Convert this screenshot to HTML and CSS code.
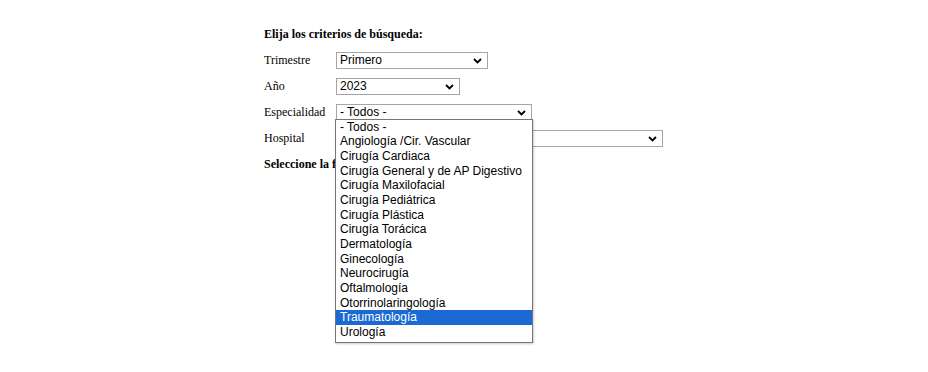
FILE: index.html
```html
<!DOCTYPE html>
<html lang="es">
<head>
<meta charset="UTF-8" />
<title>Listas de espera</title>
<link rel="stylesheet" href="styles.css">
</head>
<body>
<div id="criterios">
    <h4>Elija los criterios de búsqueda:</h4>
    <div class="fila">
        <label>Trimestre</label>
        <span class="combo w-trim">
            <select><option>Primero</option></select>
            <svg class="flecha" width="9" height="6" viewBox="0 0 9 6"><path d="M1 1 L4.5 4.5 L8 1" /></svg>
        </span>
    </div>
    <div class="fila">
        <label>Año</label>
        <span class="combo w-anio">
            <select><option>2023</option></select>
            <svg class="flecha" width="9" height="6" viewBox="0 0 9 6"><path d="M1 1 L4.5 4.5 L8 1" /></svg>
        </span>
    </div>
    <div class="fila">
        <label>Especialidad</label>
        <span class="combo w-esp">
            <select><option>- Todos -</option></select>
            <svg class="flecha" width="9" height="6" viewBox="0 0 9 6"><path d="M1 1 L4.5 4.5 L8 1" /></svg>
            <ul class="lista">
                <li>- Todos -</li>
                <li>Angiología /Cir. Vascular</li>
                <li>Cirugía Cardiaca</li>
                <li>Cirugía General y de AP Digestivo</li>
                <li>Cirugía Maxilofacial</li>
                <li>Cirugía Pediátrica</li>
                <li>Cirugía Plástica</li>
                <li>Cirugía Torácica</li>
                <li>Dermatología</li>
                <li>Ginecología</li>
                <li>Neurocirugía</li>
                <li>Oftalmología</li>
                <li>Otorrinolaringología</li>
                <li class="sel">Traumatología</li>
                <li>Urología</li>
            </ul>
        </span>
    </div>
    <div class="fila">
        <label>Hospital</label>
        <span class="combo w-hosp">
            <select><option></option></select>
            <svg class="flecha" width="9" height="6" viewBox="0 0 9 6"><path d="M1 1 L4.5 4.5 L8 1" /></svg>
        </span>
    </div>
    <h4>Seleccione la fecha:</h4>
</div>
</body>
</html>
```
FILE: styles.css
```css
*{margin:0;padding:0;}
html,body{min-height:372px;}
body{background:#fff;color:#000;font:12px/1.2 "Liberation Serif","Times New Roman",serif;}
ul{list-style-type:none;}
#criterios{width:400px;margin:0 auto;padding-top:21px;}
#criterios h4{font:700 12px/26px "Liberation Serif","Times New Roman",serif;}
.fila{display:flex;align-items:center;height:26px;}
.fila label{width:72px;}
.combo{position:relative;display:block;height:17px;}
.combo select{-webkit-appearance:none;appearance:none;display:block;width:100%;height:17px;box-sizing:border-box;border:1px solid #a5a5a5;border-radius:0;background:#fff;font:12px/15px "Liberation Sans",Arial,sans-serif;color:#000;padding:0 0 0 3px;outline:none;}
.flecha{position:absolute;right:6px;top:6px;pointer-events:none;}
.flecha path{fill:none;stroke:#000;stroke-width:1.8;}
.w-trim{width:152px;}
.w-anio{width:124px;}
.w-esp{width:196px;}
.w-hosp{width:327px;}
.lista{position:absolute;left:-1px;top:15px;width:198px;box-sizing:border-box;border:1px solid #767676;background:#fff;box-shadow:1px 1px 2px rgba(0,0,0,.2);padding:0 0 2px;z-index:2;}
.lista li{height:14.7px;padding-left:4px;font:12px/14.7px "Liberation Sans",Arial,sans-serif;white-space:nowrap;}
.lista li.sel{background:#1b6ad3;color:#fff;}
```
